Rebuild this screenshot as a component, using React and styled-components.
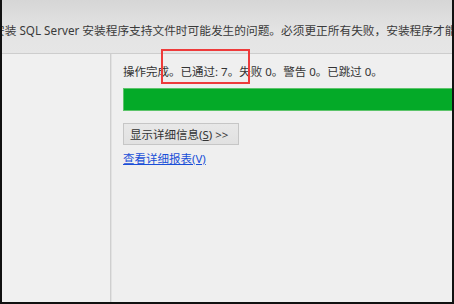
import React from 'react';
import styled, { createGlobalStyle } from 'styled-components';

const GlobalStyle = createGlobalStyle`
  html, body {
    margin: 0;
    padding: 0;
    background: #111;
  }
  body {
    font-family: "Noto Sans", "Noto Sans CJK SC", sans-serif;
  }
`;

const Frame = styled.div`
  width: 454px;
  height: 304px;
  box-sizing: border-box;
  border-left: 2px solid #111;
  border-right: 2px solid #111;
  border-bottom: 2px solid #111;
  background: #efefef;
  display: flex;
  flex-direction: column;
  overflow: hidden;
  position: relative;
`;

const Header = styled.div`
  height: 54px;
  box-sizing: border-box;
  flex-shrink: 0;
  background: linear-gradient(#d6d6d6, #e4e4e4 60%, #e6e6e6);
  border-bottom: 1px solid #cdcdcd;
  display: flex;
  align-items: center;
  overflow: hidden;
`;

const HeaderText = styled.div`
  margin-left: -9px;
  margin-top: 6px;
  white-space: nowrap;
  font-size: 11.7px;
  color: #3a3a3a;
`;

const Body = styled.div`
  flex: 1;
  display: flex;
`;

const Sidebar = styled.div`
  width: 108px;
  flex-shrink: 0;
  background: #f0f0f0;
  border-right: 1px solid #cfcfcf;
  box-shadow: 1px 0 0 #e2e2e2;
`;

const Content = styled.div`
  flex: 1;
  padding: 9px 0 0 12px;
  display: flex;
  flex-direction: column;
  align-items: flex-start;
  position: relative;
`;

const Status = styled.div`
  font-size: 11.5px;
  color: #333;
  height: 18px;
  line-height: 18px;
  white-space: nowrap;
`;

const Progress = styled.div`
  margin-top: 7px;
  width: calc(100% + 2px);
  height: 23px;
  box-sizing: border-box;
  border: 1px solid #5cc46a;
  background: #04aa28;
`;

const DetailsButton = styled.button`
  margin-top: 12px;
  height: 22px;
  width: 116px;
  box-sizing: border-box;
  padding: 0 0 0 6px;
  text-align: left;
  border: 1px solid #c6c6c6;
  background: linear-gradient(#e8e8e8, #e1e1e1);
  font-family: inherit;
  font-size: 11.5px;
  color: #333;
  cursor: pointer;

  u {
    text-decoration: underline;
  }
`;

const ReportLink = styled.a`
  margin-top: 5px;
  font-size: 11.5px;
  color: #1a4fd8;
  text-decoration: underline;
  cursor: pointer;
`;

const Highlight = styled.div`
  position: absolute;
  left: 159px;
  top: 49px;
  width: 89px;
  height: 35px;
  box-sizing: border-box;
  border: 2px solid #ee3b3b;
  pointer-events: none;
`;

export default function App() {
  return (
    <>
      <GlobalStyle />
      <Frame>
        <Header>
          <HeaderText>
            安装 SQL Server 安装程序支持文件时可能发生的问题。必须更正所有失败，安装程序才能继续。
          </HeaderText>
        </Header>
        <Body>
          <Sidebar />
          <Content>
            <Status>操作完成。已通过: 7。失败 0。警告 0。已跳过 0。</Status>
            <Progress />
            <DetailsButton>
              显示详细信息(<u>S</u>) &gt;&gt;
            </DetailsButton>
            <ReportLink>查看详细报表(V)</ReportLink>
          </Content>
        </Body>
        <Highlight />
      </Frame>
    </>
  );
}
